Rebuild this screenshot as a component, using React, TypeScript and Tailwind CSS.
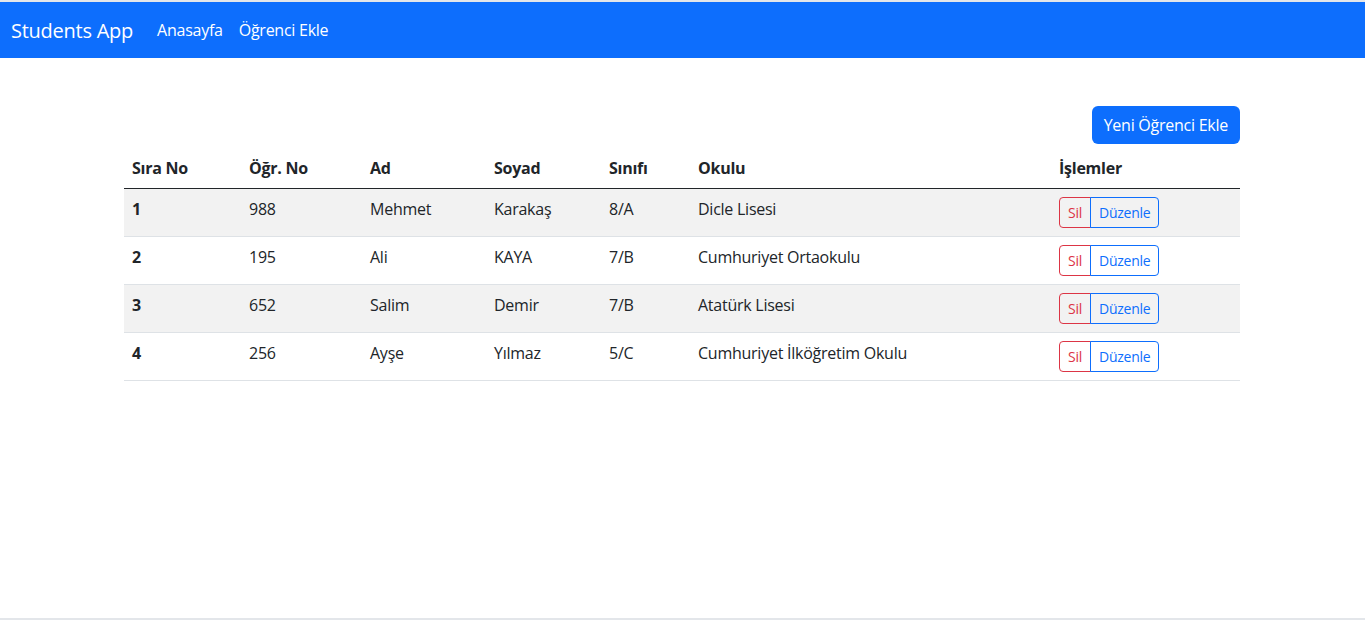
import React from 'react';

interface Student {
  sira: number;
  no: string;
  ad: string;
  soyad: string;
  sinif: string;
  okul: string;
}

const students: Student[] = [
  { sira: 1, no: '988', ad: 'Mehmet', soyad: 'Karakaş', sinif: '8/A', okul: 'Dicle Lisesi' },
  { sira: 2, no: '195', ad: 'Ali', soyad: 'KAYA', sinif: '7/B', okul: 'Cumhuriyet Ortaokulu' },
  { sira: 3, no: '652', ad: 'Salim', soyad: 'Demir', sinif: '7/B', okul: 'Atatürk Lisesi' },
  { sira: 4, no: '256', ad: 'Ayşe', soyad: 'Yılmaz', sinif: '5/C', okul: 'Cumhuriyet İlköğretim Okulu' },
];

const headers = ['Sıra No', 'Öğr. No', 'Ad', 'Soyad', 'Sınıfı', 'Okulu', 'İşlemler'];

export default function App() {
  return (
    <div className="h-[620px] flex flex-col border-t-2 border-b-2 border-[#e3e6ea] bg-white text-[#212529] font-['Open_Sans',sans-serif] tracking-[-0.25px]">
      <nav className="h-14 bg-[#0d6efd] flex items-center pl-[11px] pr-3 shrink-0">
        <a className="text-white text-xl mr-4 leading-[30px] mt-0.5">Students App</a>
        <a className="text-white text-base px-2">Anasayfa</a>
        <a className="text-white text-base px-2">Öğrenci Ekle</a>
      </nav>

      <div className="w-[1116px] ml-[124px] mt-12">
        <div className="flex justify-end mb-1">
          <button className="bg-[#0d6efd] text-white text-base rounded-md px-3 h-[38px] leading-6">
            Yeni Öğrenci Ekle
          </button>
        </div>

        <table className="w-full table-fixed border-collapse text-base leading-6">
          <colgroup>
            <col className="w-[117px]" />
            <col className="w-[121px]" />
            <col className="w-[124px]" />
            <col className="w-[115px]" />
            <col className="w-[89px]" />
            <col className="w-[361px]" />
            <col className="w-[189px]" />
          </colgroup>
          <thead>
            <tr className="border-b border-[#212529]">
              {headers.map((h) => (
                <th key={h} className="text-left font-bold p-2 align-top">
                  {h}
                </th>
              ))}
            </tr>
          </thead>
          <tbody>
            {students.map((s, i) => (
              <tr
                key={s.sira}
                className={`border-b border-[#dee2e6] ${i % 2 === 0 ? 'bg-[#f2f2f2]' : 'bg-white'}`}
              >
                <td className="p-2 align-top font-bold">{s.sira}</td>
                <td className="p-2 align-top">{s.no}</td>
                <td className="p-2 align-top">{s.ad}</td>
                <td className="p-2 align-top">{s.soyad}</td>
                <td className="p-2 align-top">{s.sinif}</td>
                <td className="p-2 align-top">{s.okul}</td>
                <td className="p-2 align-top">
                  <div className="inline-flex">
                    <button className="h-[31px] px-2 text-sm text-[#dc3545] border border-[#dc3545] rounded-l">
                      Sil
                    </button>
                    <button className="h-[31px] px-2 text-sm text-[#0d6efd] border border-[#0d6efd] rounded-r -ml-px">
                      Düzenle
                    </button>
                  </div>
                </td>
              </tr>
            ))}
          </tbody>
        </table>
      </div>
    </div>
  );
}
